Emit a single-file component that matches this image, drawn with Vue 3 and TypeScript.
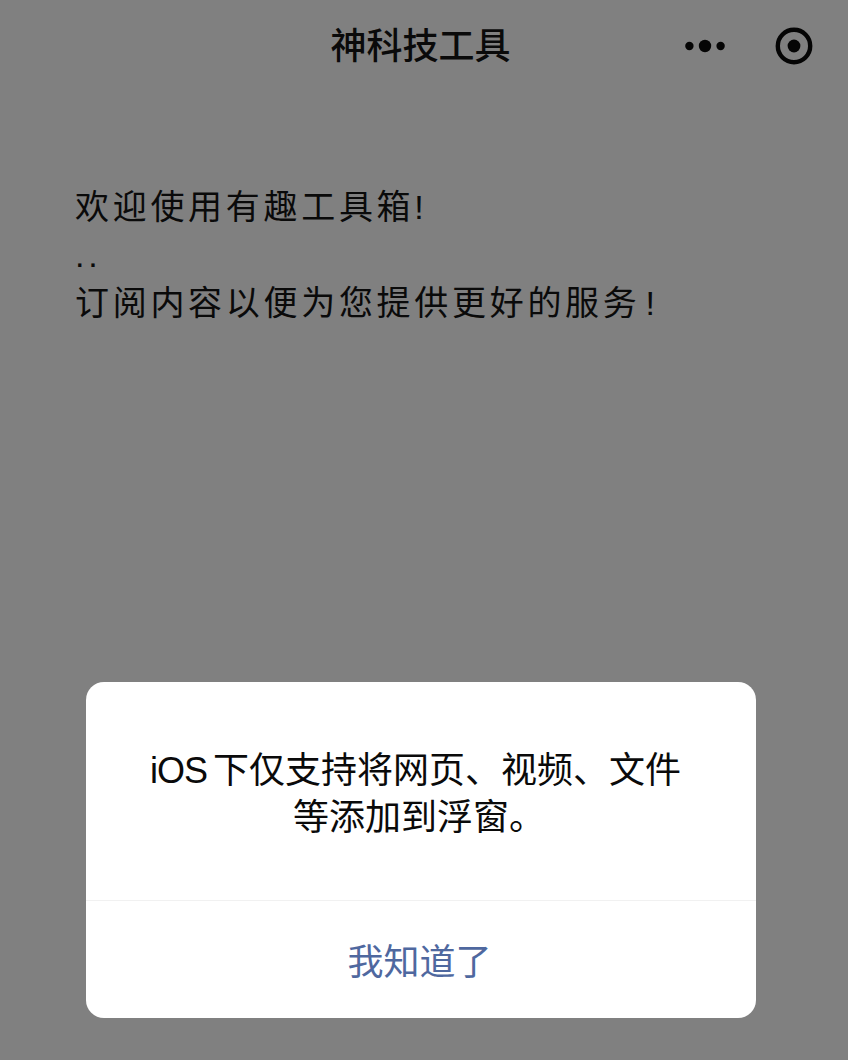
<script setup lang="ts">
const title: string = '神科技工具'
</script>

<template>
  <div class="page">
    <header class="nav">
      <h1 class="title">{{ title }}</h1>
      <div class="capsule">
        <svg class="more" width="40" height="14" viewBox="0 0 40 14" aria-hidden="true">
          <circle cx="4.4" cy="7" r="4.2" />
          <circle cx="20" cy="7" r="6.2" />
          <circle cx="35.6" cy="7" r="4.2" />
        </svg>
        <svg class="target" width="38" height="38" viewBox="0 0 38 38" aria-hidden="true">
          <circle class="ring" cx="19" cy="19" r="16.2" />
          <circle cx="19" cy="19" r="6.4" />
        </svg>
      </div>
    </header>
    <main class="content">
      <p class="line">欢迎使用有趣工具箱!</p>
      <p class="line">..</p>
      <p class="line">订阅内容以便为您提供更好的服务<span class="bang">!</span></p>
    </main>
    <div class="dialog">
      <div class="message">
        <p class="first"><span class="latin">iOS</span> 下仅支持将网页、视频、文件</p>
        <p>等添加到浮窗。</p>
      </div>
      <button class="confirm" type="button">我知道了</button>
    </div>
  </div>
</template>

<style scoped>
.page {
  position: relative;
  height: 1060px;
  background: #808080;
  color: #0a0a0a;
  font-family: "Liberation Sans", "Noto Sans CJK SC", sans-serif;
  overflow: hidden;
}
.nav {
  position: relative;
  display: flex;
  align-items: center;
  justify-content: center;
  height: 94px;
  padding-right: 7px;
  box-sizing: border-box;
}
.title {
  margin: 0;
  font-size: 36px;
  font-weight: 500;
  line-height: 48px;
}
.capsule {
  position: absolute;
  top: 27px;
  right: 35px;
  display: flex;
  align-items: center;
  gap: 50px;
}
.more,
.target {
  fill: #050505;
}
.ring {
  fill: none;
  stroke: #050505;
  stroke-width: 4.4;
}
.content {
  padding: 89px 0 0 75px;
}
.line {
  margin: 0;
  font-size: 34px;
  line-height: 48px;
  letter-spacing: 3.7px;
  font-weight: 400;
}
.bang {
  margin-left: 5px;
}
.dialog {
  position: absolute;
  left: 86px;
  top: 682px;
  width: 670px;
  height: 336px;
  display: flex;
  flex-direction: column;
  background: #fff;
  border-radius: 18px;
}
.message {
  height: 219px;
  padding: 65px 4px 0 0;
  box-sizing: border-box;
  border-bottom: 1px solid #f1f1f1;
  text-align: center;
  font-size: 36px;
  line-height: 47px;
  color: #0a0a0a;
}
.message p {
  margin: 0;
}
.message .first {
  margin-right: 7px;
  word-spacing: -4px;
}
.latin {
  letter-spacing: -1px;
}
.confirm {
  flex: 1;
  border: 0;
  padding: 0 3px 2px 0;
  background: transparent;
  font: inherit;
  font-size: 36px;
  color: #4f689f;
}
</style>
